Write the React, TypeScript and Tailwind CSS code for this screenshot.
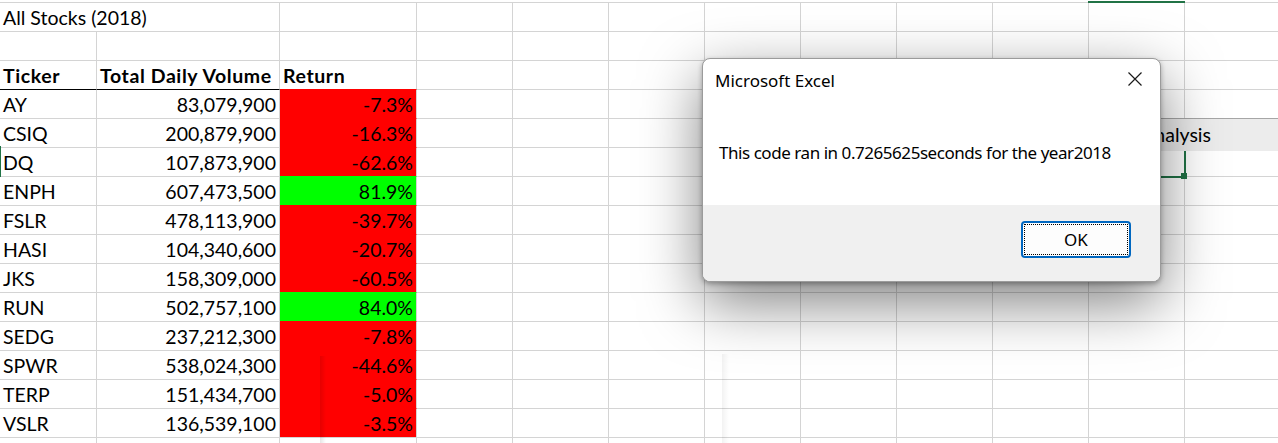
import React from "react";

const stocks: [string, string, string, boolean][] = [
  ["AY", "83,079,900", "-7.3%", false],
  ["CSIQ", "200,879,900", "-16.3%", false],
  ["DQ", "107,873,900", "-62.6%", false],
  ["ENPH", "607,473,500", "81.9%", true],
  ["FSLR", "478,113,900", "-39.7%", false],
  ["HASI", "104,340,600", "-20.7%", false],
  ["JKS", "158,309,000", "-60.5%", false],
  ["RUN", "502,757,100", "84.0%", true],
  ["SEDG", "237,212,300", "-7.8%", false],
  ["SPWR", "538,024,300", "-44.6%", false],
  ["TERP", "151,434,700", "-5.0%", false],
  ["VSLR", "136,539,100", "-3.5%", false],
];

const cell =
  "flex h-[29px] shrink-0 items-end whitespace-nowrap border-t border-r px-[3px] pb-[2px] leading-[22px]";

function Blanks() {
  return (
    <>
      {Array.from({ length: 9 }).map((_, i) => (
        <div key={i} className="h-[29px] w-[96px] shrink-0 border-t border-r border-[#d4d4d4]" />
      ))}
    </>
  );
}

function Sheet() {
  return (
    <div className="flex flex-col pt-[2px] font-['Lato',sans-serif] text-[19.5px] text-black">
      <div className="flex">
        <div className={`${cell} w-[280px] border-[#d4d4d4]`}>All Stocks (2018)</div>
        <div className={`${cell} w-[137px] border-[#d4d4d4]`} />
        <Blanks />
      </div>
      <div className="flex">
        <div className={`${cell} w-[97px] border-[#d4d4d4]`} />
        <div className={`${cell} w-[183px] border-[#d4d4d4]`} />
        <div className={`${cell} w-[137px] border-[#d4d4d4]`} />
        <Blanks />
      </div>
      <div className="flex font-bold tracking-[0.6px]">
        <div className={`${cell} w-[97px] border-[#d4d4d4]`}>Ticker</div>
        <div className={`${cell} w-[183px] border-[#d4d4d4]`}>Total Daily Volume</div>
        <div className={`${cell} w-[137px] border-[#d4d4d4]`}>Return</div>
        <Blanks />
      </div>
      {stocks.map(([ticker, volume, ret, up], i) => (
        <div key={ticker} className="flex">
          <div
            className={`${cell} w-[97px] border-r-[#d4d4d4] ${
              i === 0 ? "border-t-black" : "border-t-[#d4d4d4]"
            }`}
          >
            {ticker}
          </div>
          <div
            className={`${cell} w-[183px] justify-end border-r-[#d4d4d4] ${
              i === 0 ? "border-t-black" : "border-t-[#d4d4d4]"
            }`}
          >
            {volume}
          </div>
          <div
            className={`${cell} w-[137px] justify-end border-r-[#d4d4d4] ${
              up ? "border-t-[#00ff00] bg-[#00ff00]" : "border-t-[#ff0000] bg-[#ff0000]"
            }`}
          >
            {ret}
          </div>
          <Blanks />
        </div>
      ))}
      <div className="flex">
        <div className={`${cell} w-[97px] border-[#d4d4d4]`} />
        <div className={`${cell} w-[183px] border-[#d4d4d4]`} />
        <div className={`${cell} w-[137px] border-[#d4d4d4]`} />
        <Blanks />
      </div>
    </div>
  );
}

function MessageBox() {
  return (
    <div className="absolute left-[702px] top-[58px] w-[459px] overflow-hidden rounded-[8px] border border-[#9b9b9b] bg-white font-['Noto_Sans',sans-serif] text-black shadow-[0_2px_5px_rgba(0,0,0,0.3),0_20px_60px_rgba(0,0,0,0.5)]">
      <div className="flex h-[46px] justify-between">
        <div className="pl-[12px] pt-[11px] text-[17px] leading-[22px]">Microsoft Excel</div>
        <svg className="mr-[18px] mt-[13px]" width="14" height="14" viewBox="0 0 14 14">
          <path d="M0.5 0.5L13.5 13.5M13.5 0.5L0.5 13.5" stroke="#1a1a1a" strokeWidth="1.2" fill="none" />
        </svg>
      </div>
      <div className="h-[100px] pl-[16px] pt-[37px] text-[17px] leading-[22px] tracking-[-0.45px]">
        This code ran in 0.7265625seconds for the year2018
      </div>
      <div className="flex h-[76px] justify-end bg-[#f0f0f0] pr-[29px] pt-[16px]">
        <div className="relative flex h-[37px] w-[110px] items-center justify-center rounded-[4px] border-2 border-[#0067c0] bg-[#fdfdfd] text-[17px] leading-[22px]">
          <div className="absolute inset-[1px] border border-dotted border-black" />
          OK
        </div>
      </div>
    </div>
  );
}

export default function App() {
  return (
    <div className="relative h-[443px] w-[1278px] overflow-hidden bg-white">
      <Sheet />

      {/* selection marks */}
      <div className="absolute left-[1088px] top-[1px] h-[2px] w-[97px] bg-[#217346]" />
      <div className="absolute left-0 top-[146px] h-[31px] w-[1px] bg-[#217346]" />
      <div className="absolute left-[1087px] top-[146px] h-[32px] w-[99px] border-2 border-[#217346]" />
      <div className="absolute left-[1181px] top-[173px] h-[6px] w-[6px] bg-[#217346]" />

      {/* form button behind the message box */}
      <div className="absolute left-[1000px] top-[118px] flex h-[33px] w-[300px] items-center border-t border-[#a6a6a6] bg-[#ececec] font-['Lato',sans-serif] text-[19.5px] leading-[22px] text-black">
        <div className="w-[211px] text-right">Run Analysis</div>
      </div>

      {/* faint shadows of another window */}
      <div className="absolute left-[320px] top-[356px] h-[90px] w-[6px] bg-gradient-to-r from-black/10 to-transparent" />
      <div className="absolute left-[722px] top-[354px] h-[90px] w-[7px] bg-gradient-to-r from-black/5 to-transparent" />

      <MessageBox />
    </div>
  );
}
